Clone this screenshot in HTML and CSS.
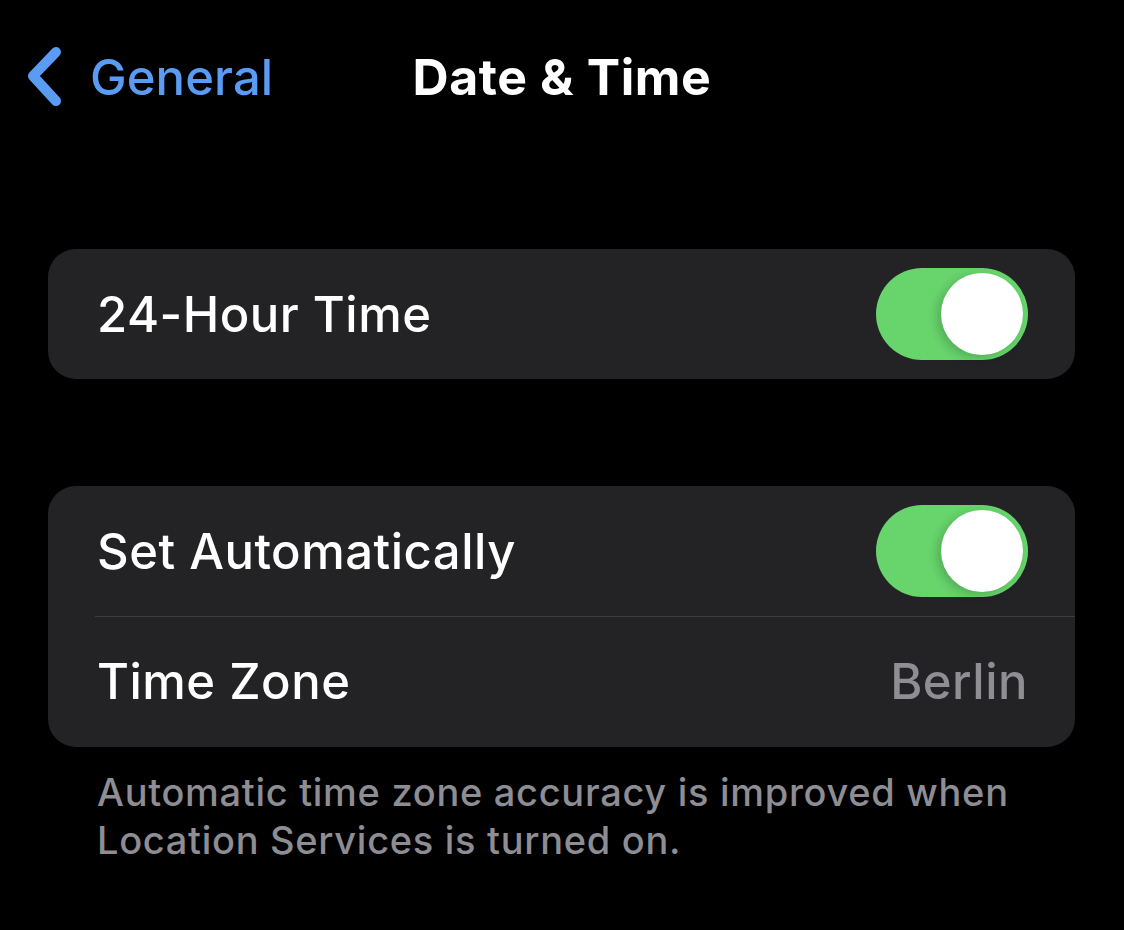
FILE: index.html
```html
<!DOCTYPE html>
<html lang="en">
<head>
<meta charset="utf-8">
<title>Date &amp; Time</title>
<link rel="stylesheet" href="styles.css">
</head>
<body>
<div class="screen">
  <header class="navbar">
    <a class="back" href="#">
      <svg class="chevron" viewBox="0 0 40 62" width="40" height="62" aria-hidden="true">
        <path d="M32 6 L9 30 L32 55" fill="none" stroke="currentColor" stroke-width="10" stroke-linecap="round" stroke-linejoin="round"/>
      </svg>
      <span>General</span>
    </a>
    <h1 class="title">Date &amp; Time</h1>
    <div class="spacer"></div>
  </header>

  <section class="group">
    <div class="row">
      <span class="label">24-Hour Time</span>
      <span class="switch on"><span class="knob"></span></span>
    </div>
  </section>

  <section class="group second">
    <div class="row">
      <span class="label">Set Automatically</span>
      <span class="switch on"><span class="knob"></span></span>
    </div>
    <div class="row bordered">
      <span class="label">Time Zone</span>
      <span class="value">Berlin</span>
    </div>
  </section>
  <p class="footnote">Automatic time zone accuracy is improved when Location Services is turned on.</p>
</div>
</body>
</html>
```

FILE: styles.css
```css
html, body {
  margin: 0;
  padding: 0;
  background: #000;
}

body {
  font-family: Inter, "Noto Sans", "Liberation Sans", sans-serif;
  color: #fff;
  -webkit-font-smoothing: antialiased;
}

.screen {
  width: 1124px;
  height: 930px;
  overflow: hidden;
  display: flex;
  flex-direction: column;
}

.navbar {
  height: 154px;
  display: grid;
  grid-template-columns: 1fr auto 1fr;
  align-items: center;
}

.back {
  display: flex;
  align-items: center;
  gap: 26px;
  padding-left: 24px;
  color: #5a9cf4;
  text-decoration: none;
  font-size: 49px;
  font-weight: 500;
  letter-spacing: 0.1px;
}

.chevron {
  display: block;
  width: 40px;
  height: 62px;
}

.title {
  margin: 0;
  font-size: 50px;
  font-weight: 700;
  letter-spacing: 0.6px;
}

.group {
  margin: 95px 49px 0 48px;
  background: #232325;
  border-radius: 28px;
  overflow: hidden;
}

.group.second {
  margin-top: 107px;
}

.row {
  height: 130px;
  display: flex;
  align-items: center;
  justify-content: space-between;
  padding: 0 47px 0 49px;
  position: relative;
}

.row.bordered {
  height: 131px;
}

.row.bordered::before {
  content: "";
  position: absolute;
  top: 0;
  left: 47px;
  right: 0;
  height: 1px;
  background: #3d3d40;
}

.label,
.value {
  font-size: 49px;
  font-weight: 500;
  letter-spacing: 0.5px;
}

.value {
  color: #8e8e93;
}

.switch {
  width: 152px;
  height: 92px;
  border-radius: 46px;
  background: #3a3a3c;
  display: flex;
  align-items: center;
  padding: 0 5px;
  box-sizing: border-box;
}

.switch.on {
  background: #67d46c;
  justify-content: flex-end;
}

.knob {
  width: 82px;
  height: 82px;
  border-radius: 50%;
  background: #fff;
  box-shadow: -4px 3px 10px rgba(0, 0, 0, 0.18);
}

.footnote {
  margin: 21px 49px 0 97px;
  font-size: 38px;
  font-weight: 500;
  line-height: 48px;
  color: #8d8d93;
  letter-spacing: 0.7px;
}
```
